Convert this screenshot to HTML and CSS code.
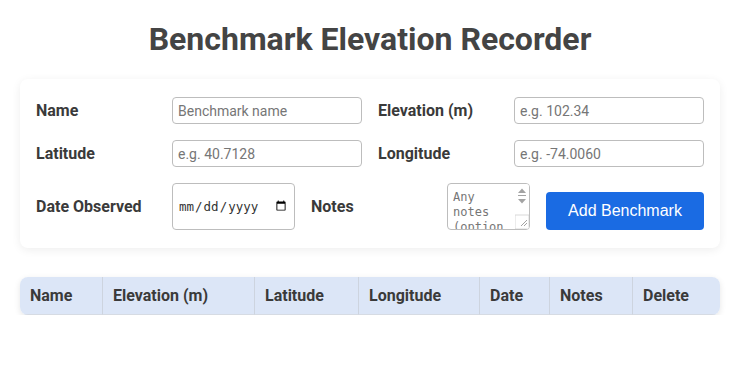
FILE: index.html
```html
<!DOCTYPE html>
<html lang="en">
  <head>
    <meta charset="UTF-8" />
    <meta name="viewport" content="width=device-width, initial-scale=1.0" />
    <title>Benchmark Elevation Recorder</title>
    <link rel="stylesheet" href="styles.css">
  </head>
  <body>
    <h1 class="title">Benchmark Elevation Recorder</h1>

    <form class="card" onsubmit="return false">
      <div class="row">
        <div class="field">
          <label for="name">Name</label>
          <input type="text" id="name" placeholder="Benchmark name" />
        </div>
        <div class="field">
          <label for="elev">Elevation (m)</label>
          <input type="text" id="elev" placeholder="e.g. 102.34" />
        </div>
      </div>
      <div class="row">
        <div class="field">
          <label for="lat">Latitude</label>
          <input type="text" id="lat" placeholder="e.g. 40.7128" />
        </div>
        <div class="field">
          <label for="lon">Longitude</label>
          <input type="text" id="lon" placeholder="e.g. -74.0060" />
        </div>
      </div>
      <div class="row last">
        <div class="field tight">
          <label for="date">Date Observed</label>
          <input type="date" id="date" class="date" />
        </div>
        <div class="field tight">
          <label for="notes">Notes</label>
          <div class="notes-wrap">
            <textarea id="notes" class="notes" placeholder="Any notes (optional)"></textarea>
            <!-- scrollbar drawn by hand, headless hides the real one -->
            <svg class="fake-scroll" width="14" height="45" viewBox="0 0 14 45">
              <rect x="0" y="0" width="14" height="45" fill="#fff" />
              <path d="M3 9 L7 4.5 L11 9 Z" fill="#a3a3a3" />
              <rect x="3" y="11" width="8" height="1" fill="#a3a3a3" />
              <path d="M3 15 L11 15 L7 19.5 Z" fill="#a3a3a3" />
              <rect x="0" y="31" width="14" height="14" fill="#fff" stroke="#d0d0d0" stroke-width="0.8" />
              <path d="M6 42 L12 36 M9 42 L12 39" stroke="#8a8a8a" stroke-width="0.8" />
            </svg>
          </div>
        </div>
        <button class="add-btn">Add Benchmark</button>
      </div>
    </form>

    <table class="list">
      <thead>
        <tr>
          <th class="c-name">Name</th>
          <th class="c-elev">Elevation (m)</th>
          <th class="c-lat">Latitude</th>
          <th class="c-lon">Longitude</th>
          <th class="c-date">Date</th>
          <th class="c-notes">Notes</th>
          <th class="c-del">Delete</th>
        </tr>
      </thead>
      <tbody></tbody>
    </table>
  </body>
</html>
```

FILE: styles.css
```css
html,
body {
  margin: 0;
  font-family: Roboto, "Liberation Sans", sans-serif;
  background-color: #fff;
  color: #3a3a3a;
}
body {
  padding: 0 20px;
}
.title {
  margin: 0;
  padding: 20px 0 21px;
  text-align: center;
  font-size: 32px;
  font-weight: 700;
  line-height: 38px;
  color: #444;
}
.card {
  background-color: #fff;
  border-radius: 8px;
  box-shadow: 0 2px 10px rgba(0, 0, 0, 0.07);
  padding: 18px 16px;
  display: flex;
  flex-direction: column;
  gap: 16px;
}
.row {
  display: flex;
  gap: 16px;
}
.row.last {
  align-items: flex-end;
}
.field {
  flex: 1;
  display: flex;
  align-items: center;
}
.field.tight {
  flex: none;
}
.field label {
  width: 136px;
  flex: none;
  font-size: 16px;
  font-weight: 700;
  color: #3a3a3a;
}
.field input[type="text"] {
  flex: 1;
  min-width: 0;
  height: 27px;
  box-sizing: border-box;
  padding: 0 5px;
  border: 1px solid #bdbdbd;
  border-radius: 4px;
  font-family: Roboto, sans-serif;
  font-size: 14px;
  color: #333;
}
.field input::placeholder,
.field textarea::placeholder {
  color: #767676;
}
.date {
  width: 123px;
  height: 47px;
  box-sizing: border-box;
  padding: 0 5px;
  border: 1px solid #bdbdbd;
  border-radius: 4px;
  font-family: "DejaVu Sans Mono", monospace;
  font-size: 12.5px;
  color: #333;
}
.notes-wrap {
  position: relative;
  width: 83px;
  height: 47px;
}
.notes {
  display: block;
  width: 83px;
  height: 47px;
  box-sizing: border-box;
  padding: 6px 20px 0 5px;
  border: 1px solid #bdbdbd;
  border-radius: 4px;
  font-family: "DejaVu Sans Mono", monospace;
  font-size: 12px;
  line-height: 15px;
  resize: none;
  overflow: hidden;
}
.fake-scroll {
  position: absolute;
  top: 1px;
  right: 1px;
  border-radius: 0 3px 3px 0;
}
.add-btn {
  flex: 1;
  height: 38px;
  border: none;
  border-radius: 4px;
  background-color: #1a6be3;
  color: #fff;
  font-family: "Liberation Sans", Arial, sans-serif;
  font-size: 16px;
  cursor: pointer;
}
.list {
  margin-top: 29px;
  width: 100%;
  border-collapse: separate;
  border-spacing: 0;
  border-radius: 8px;
  overflow: hidden;
  box-shadow: 0 2px 6px rgba(0, 0, 0, 0.1);
}
.list th {
  background-color: #dce6f7;
  text-align: left;
  padding: 0 10px;
  height: 37px;
  font-size: 16px;
  font-weight: 700;
  color: #3a3a3a;
  border-left: 1px solid #cdd4df;
  border-bottom: 1px solid #d6dbe3;
}
.list th:first-child {
  border-left: none;
}
.c-name { width: 62px; }
.c-elev { width: 131px; }
.c-lat { width: 83px; }
.c-lon { width: 100px; }
.c-date { width: 49px; }
.c-notes { width: 62px; }
```
